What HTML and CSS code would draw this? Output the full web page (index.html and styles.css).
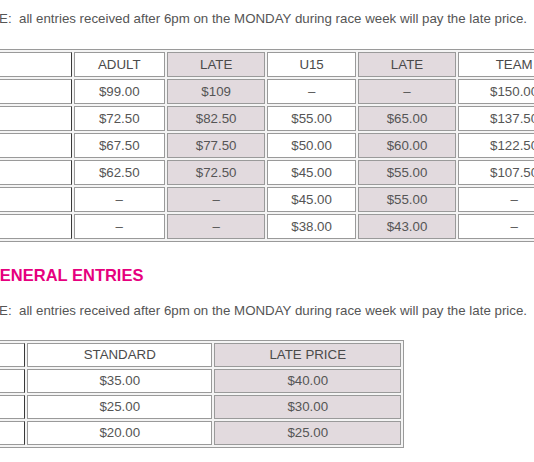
FILE: index.html
```html
<!DOCTYPE html>
<html>
<head>
<meta charset="utf-8">
<link rel="stylesheet" href="styles.css">
</head>
<body>
<div class="page">
  <p class="note">NOTE:&nbsp; all entries received after 6pm on the MONDAY during race week will pay the late price.</p>
  <table class="prices prices-main">
    <colgroup>
      <col class="c-label1"><col class="c-adult"><col class="c-late"><col class="c-u15"><col class="c-late"><col class="c-team">
    </colgroup>
    <tr class="head"><td></td><td>ADULT</td><td class="late">LATE</td><td>U15</td><td class="late">LATE</td><td>TEAM</td></tr>
    <tr><td></td><td>$99.00</td><td class="late">$109</td><td>–</td><td class="late">–</td><td>$150.00</td></tr>
    <tr><td></td><td>$72.50</td><td class="late">$82.50</td><td>$55.00</td><td class="late">$65.00</td><td>$137.50</td></tr>
    <tr><td></td><td>$67.50</td><td class="late">$77.50</td><td>$50.00</td><td class="late">$60.00</td><td>$122.50</td></tr>
    <tr><td></td><td>$62.50</td><td class="late">$72.50</td><td>$45.00</td><td class="late">$55.00</td><td>$107.50</td></tr>
    <tr><td></td><td>–</td><td class="late">–</td><td>$45.00</td><td class="late">$55.00</td><td>–</td></tr>
    <tr><td></td><td>–</td><td class="late">–</td><td>$38.00</td><td class="late">$43.00</td><td>–</td></tr>
  </table>

  <h2 class="section-title">GENERAL ENTRIES</h2>
  <p class="note note-2">NOTE:&nbsp; all entries received after 6pm on the MONDAY during race week will pay the late price.</p>
  <table class="prices prices-general">
    <colgroup>
      <col class="c-label2"><col class="c-std"><col class="c-lateprice">
    </colgroup>
    <tr class="head"><td></td><td>STANDARD</td><td class="late">LATE PRICE</td></tr>
    <tr><td></td><td>$35.00</td><td class="late">$40.00</td></tr>
    <tr><td></td><td>$25.00</td><td class="late">$30.00</td></tr>
    <tr><td></td><td>$20.00</td><td class="late">$25.00</td></tr>
  </table>
</div>
</body>
</html>
```

FILE: styles.css
```css
html, body {
  margin: 0;
  padding: 0;
  background: #ffffff;
  overflow: hidden;
}
body {
  font-family: "Liberation Sans", Arial, sans-serif;
  font-size: 13.3px;
  color: #555555;
}
.page {
  margin-left: -29px;
  width: 620px;
  padding-top: 11px;
}
.note {
  margin: 0;
  line-height: 16px;
  white-space: nowrap;
}
.prices {
  border-collapse: separate;
  border-spacing: 2px;
  border: 1px solid #9a9a9a;
  background: #f4f4f4;
  table-layout: fixed;
}
.prices td {
  border: 1px solid #9a9a9a;
  background: #ffffff;
  text-align: center;
  line-height: 15px;
  padding: 4px 2px;
  white-space: nowrap;
}
.prices td:first-child {
  border-right-color: #3a3a3a;
}
.prices td.late {
  background: #e2dade;
}
.prices .head td {
  color: #4a4a4a;
}
.prices-main {
  margin-top: 22px;
  width: 604px;
  margin-left: -2px;
}
.c-label1 { width: 98px; }
.c-adult { width: 90px; }
.c-late { width: 97px; }
.c-u15 { width: 87px; }
.c-team { width: 110px; }

.section-title {
  margin: 23px 0 0 16px;
  font-size: 16.5px;
  line-height: 20px;
  font-weight: bold;
  color: #e6007e;
}
.note-2 {
  margin-top: 18px;
}
.prices-general {
  margin-top: 21px;
  margin-left: -2px;
  width: 435px;
}
.prices-general td {
  padding: 3px 2px 4px;
}
.c-label2 { width: 52px; }
.c-std { width: 182px; }
.c-lateprice { width: 183px; }
```
